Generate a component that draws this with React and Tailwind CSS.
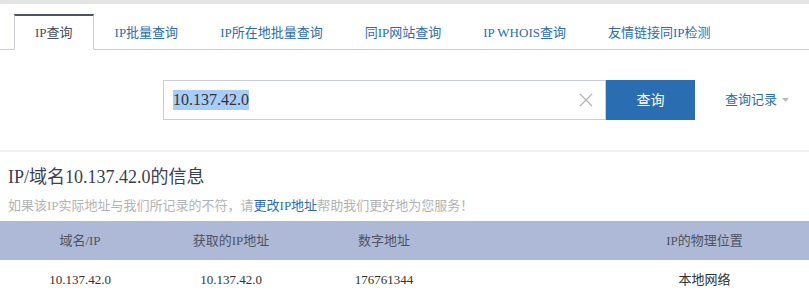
import React from "react";

const FONT = { fontFamily: '"Liberation Serif", "Noto Sans CJK SC", serif' };

const tabs = ["IP查询", "IP批量查询", "IP所在地批量查询", "同IP网站查询", "IP WHOIS查询", "友情链接同IP检测"];

export default function App() {
  return (
    <div className="w-[809px] h-[299px] overflow-hidden bg-white" style={FONT}>
      <div className="h-[4px] bg-[#e4e4e4]" />
      <div className="mt-[10px] flex pl-[14px] border-b border-[#c8cee0]">
        {tabs.map((t, i) => (
          <div
            key={t}
            className={
              i === 0
                ? "-mb-px h-[36px] flex items-center px-5 border-x border-t-2 border-b border-x-[#c8cee0] border-t-[#4a5070] border-b-white bg-white text-[13px] text-[#474c5e]"
                : "-mb-px h-[36px] flex items-center px-5 border-x border-t-2 border-b border-transparent text-[13px] text-[#2b6cb6]"
            }
          >
            {t}
          </div>
        ))}
      </div>

      <div className="mt-[30px] flex items-center pl-[163px]">
        <div className="w-[443px] h-10 border border-[#c7cde0] flex items-center pl-[9px] pr-[12px]">
          <span className="bg-[#a8cdf8] text-[16px] leading-[20px] text-[#333]">10.137.42.0</span>
          <div className="flex-1" />
          <svg width="14" height="14" viewBox="0 0 14 14">
            <path d="M1 1L13 13M13 1L1 13" stroke="#b5b5b5" strokeWidth="1.3" />
          </svg>
        </div>
        <div className="w-[89px] h-10 bg-[#2a6db0] flex items-center justify-center text-white text-[14px]">
          查询
        </div>
        <div className="ml-[30px] flex items-center text-[13px] text-[#2b6cb6]">
          查询记录
          <svg className="ml-[5px]" width="7" height="4" viewBox="0 0 7 4">
            <path d="M0 0H7L3.5 4Z" fill="#bbbbbb" />
          </svg>
        </div>
      </div>

      <div className="mt-[30px] h-[2px] bg-[#f2f2f2]" />

      <div className="pl-[8px]">
        <div className="mt-[13px] text-[18px] leading-[24px] text-[#3a3f51]">IP/域名10.137.42.0的信息</div>
        <div className="mt-[7px] text-[13px] leading-[20px] text-[#b3b3b3]">
          如果该IP实际地址与我们所记录的不符，请<span className="text-[#2b6cb6]">更改IP地址</span>帮助我们更好地为您服务！
        </div>
      </div>

      <div className="mt-[5px] grid grid-cols-[160px_142px_164px_134px_1fr] h-[39px] items-center bg-[#adb9d6] text-[13px] text-[#4f5361]">
        <div className="text-center">域名/IP</div>
        <div className="text-center">获取的IP地址</div>
        <div className="text-center">数字地址</div>
        <div />
        <div className="text-center">IP的物理位置</div>
      </div>
      <div className="grid grid-cols-[160px_142px_164px_134px_1fr] h-[39px] items-center text-[13px] text-[#333]">
        <div className="text-center">10.137.42.0</div>
        <div className="text-center">10.137.42.0</div>
        <div className="text-center">176761344</div>
        <div />
        <div className="text-center">本地网络</div>
      </div>
    </div>
  );
}
